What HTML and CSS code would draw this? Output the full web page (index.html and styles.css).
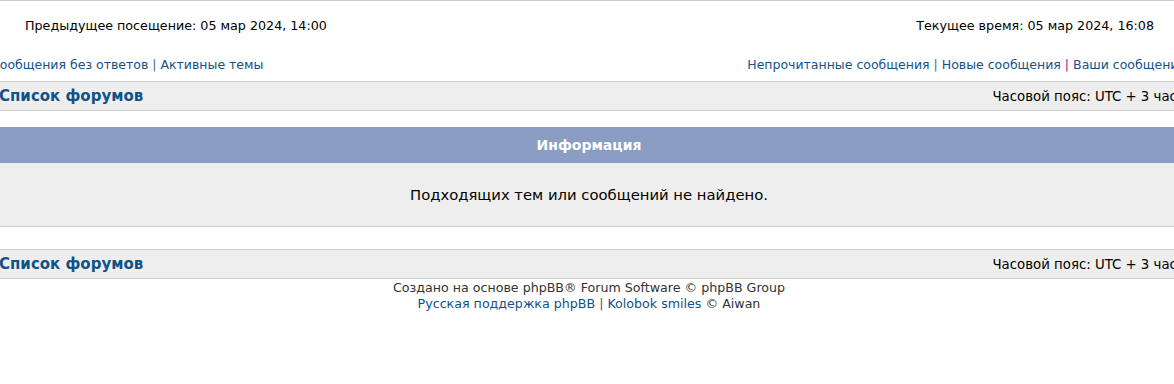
FILE: index.html
```html
<!DOCTYPE html>
<html lang="ru">
<head>
<meta charset="utf-8">
<title>Форум</title>
<link rel="stylesheet" href="styles.css">
</head>
<body>
<div class="page">
  <div class="visit-row">
    <span>Предыдущее посещение: 05 мар 2024, 14:00</span>
    <span>Текущее время: 05 мар 2024, 16:08</span>
  </div>
  <div class="links-row">
    <div><a href="#">Сообщения без ответов</a> <span class="sep">|</span> <a href="#">Активные темы</a></div>
    <div><a href="#">Непрочитанные сообщения</a> <span class="sep">|</span> <a href="#">Новые сообщения</a> <span class="sep visited">|</span> <a href="#">Ваши сообщения</a></div>
  </div>
  <div class="navbar">
    <a href="#" class="forum-link">Список форумов</a>
    <span class="tz">Часовой пояс: UTC + 3 часа</span>
  </div>
  <div class="info">
    <div class="info-head">Информация</div>
    <div class="info-body">Подходящих тем или сообщений не найдено.</div>
  </div>
  <div class="navbar">
    <a href="#" class="forum-link">Список форумов</a>
    <span class="tz">Часовой пояс: UTC + 3 часа</span>
  </div>
  <div class="footer">
    <div>Создано на основе <a href="#" class="plain">phpBB</a>® Forum Software © phpBB Group</div>
    <div><a href="#">Русская поддержка phpBB</a> <span class="sep">|</span> <a href="#">Kolobok smiles</a> © Aiwan</div>
  </div>
</div>
</body>
</html>
```
FILE: styles.css
```css
html, body {
  margin: 0;
  padding: 0;
  background: #fff;
  overflow: hidden;
}
body {
  font-family: "DejaVu Sans", Verdana, sans-serif;
  font-size: 12.5px;
  color: #000;
}
a {
  color: #105289;
  text-decoration: none;
}
.page {
  margin-left: -10px;
  width: 1198px;
  border-top: 1px solid #ccc;
}
.visit-row {
  display: flex;
  justify-content: space-between;
  padding: 17px 34px 0 35px;
  height: 39px;
  line-height: 16px;
  font-size: 12.7px;
}
.links-row {
  display: flex;
  justify-content: space-between;
  padding: 0 2px 0 1px;
  height: 24px;
  line-height: 16px;
}
.sep {
  color: #536482;
}
.sep.visited {
  color: #7a1a8a;
}
.navbar {
  display: flex;
  justify-content: space-between;
  align-items: center;
  height: 28px;
  background: #eee;
  border-top: 1px solid #ccc;
  border-bottom: 1px solid #ccc;
  padding: 0 3px 0 9px;
}
.tz {
  font-size: 13.3px;
}
.forum-link {
  font-weight: bold;
  font-size: 15px;
}
.info {
  margin: 16px 0 22px;
  border-bottom: 1px solid #ccc;
}
.info-head {
  background: #8a9dc2;
  color: #fff;
  font-weight: bold;
  font-size: 14px;
  text-align: center;
  height: 36px;
  line-height: 36px;
}
.info-body {
  background: #eee;
  text-align: center;
  height: 63px;
  line-height: 64px;
  font-size: 14.8px;
}
.footer {
  text-align: center;
  padding-top: 1px;
  line-height: 16px;
  font-size: 12.65px;
  color: #333;
}
.footer .plain {
  color: #333;
}
.footer .sep {
  color: #555;
}
```
